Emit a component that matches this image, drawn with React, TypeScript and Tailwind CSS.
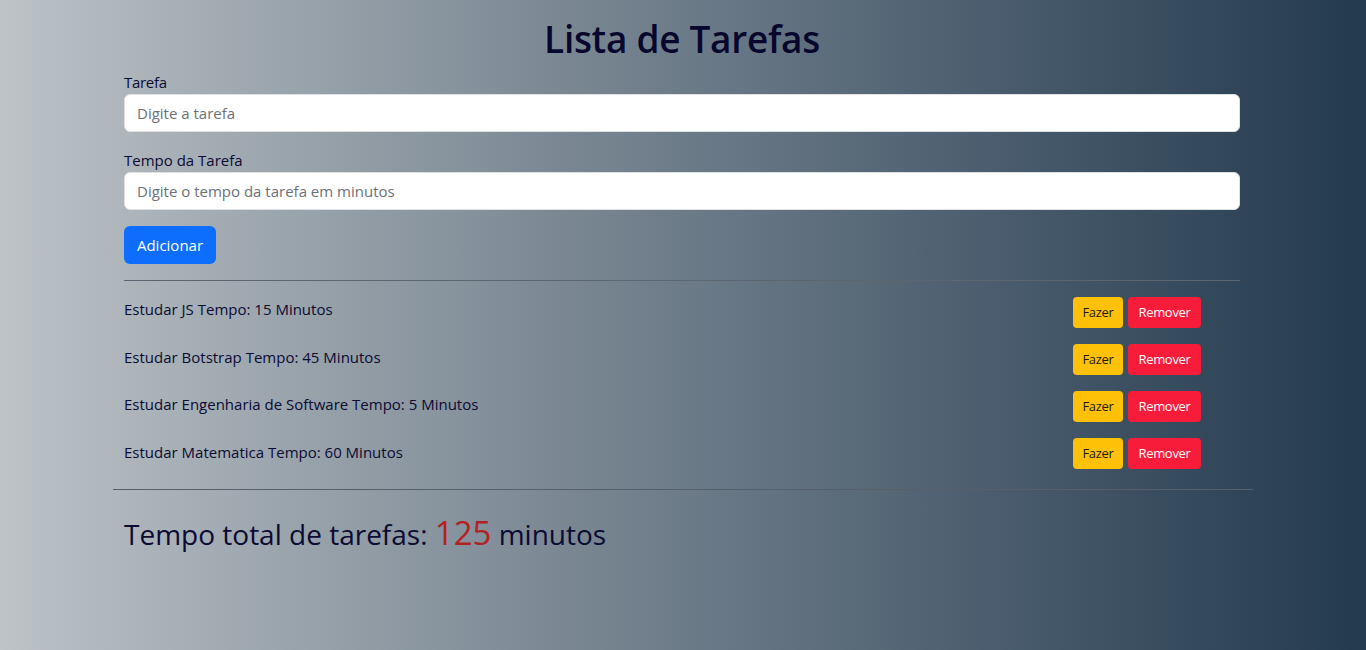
const tarefas = [
  { nome: "Estudar JS", tempo: 15 },
  { nome: "Estudar Botstrap", tempo: 45 },
  { nome: "Estudar Engenharia de Software", tempo: 5 },
  { nome: "Estudar Matematica", tempo: 60 },
];

const App = () => {
  const total = tarefas.reduce((s, t) => s + t.tempo, 0);
  return (
    <div className="min-h-[650px] w-full bg-gradient-to-r from-[#bdc3c7] to-[#243a4e] font-['Open_Sans',sans-serif] text-[#0b0b33]">
      <div className="mx-auto w-[1140px] pl-[11px] pr-[13px]">
        <h1 className="pt-[16px] text-center text-[37px] font-semibold leading-[46px] tracking-[-0.3px] text-[#07072e]">
          Lista de Tarefas
        </h1>

        <div className="mt-[8px]">
          <label className="block text-[15px] leading-[24px] tracking-[-0.3px]">Tarefa</label>
          <input
            className="block h-[38px] w-full rounded-[6px] border border-[#dee2e6] bg-white px-3 text-[15px] text-[#212529] outline-none placeholder:text-[#6b7178]"
            placeholder="Digite a tarefa"
          />
        </div>

        <div className="mt-[16px]">
          <label className="block text-[15px] leading-[24px]">Tempo da Tarefa</label>
          <input
            className="block h-[38px] w-full rounded-[6px] border border-[#dee2e6] bg-white px-3 text-[15px] text-[#212529] outline-none placeholder:text-[#6b7178]"
            placeholder="Digite o tempo da tarefa em minutos"
          />
        </div>

        <button className="mt-[16px] h-[38px] w-[92px] rounded-[6px] bg-[#0d6efd] text-[15px] text-white">
          Adicionar
        </button>

        <hr className="mt-[16px] border-t border-[#5c6670]" />

        <div className="pt-[8px]">
          {tarefas.map((t, i) => (
            <div key={t.nome} className="flex h-[47px] items-center justify-between">
              <span className={i === 0 ? "-mt-[6px] text-[15px]" : i === 3 ? "-mt-[2px] text-[15px]" : "-mt-[4px] text-[15px]"}>
                {t.nome} Tempo: {t.tempo} Minutos
              </span>
              <div className="mr-[39px] flex gap-[5px]">
                <button className="h-[31px] w-[50px] rounded-[4px] bg-[#ffc107] text-[13px] tracking-[-0.3px] text-[#1a1a1a]">
                  Fazer
                </button>
                <button className="h-[31px] w-[73px] rounded-[4px] bg-[#f71c3a] text-[13px] tracking-[-0.3px] text-white">
                  Remover
                </button>
              </div>
            </div>
          ))}
        </div>
      </div>

      <div className="mx-auto mt-[12px] w-[1140px]">
        <hr className="border-t border-[#56606a]" />
        <p className="px-[11px] pt-[26px] text-[28px] leading-[34px]">
          Tempo total de tarefas: <span className="text-[33px] text-[#b22222]">{total}</span> minutos
        </p>
      </div>
    </div>
  );
};

export default App;
